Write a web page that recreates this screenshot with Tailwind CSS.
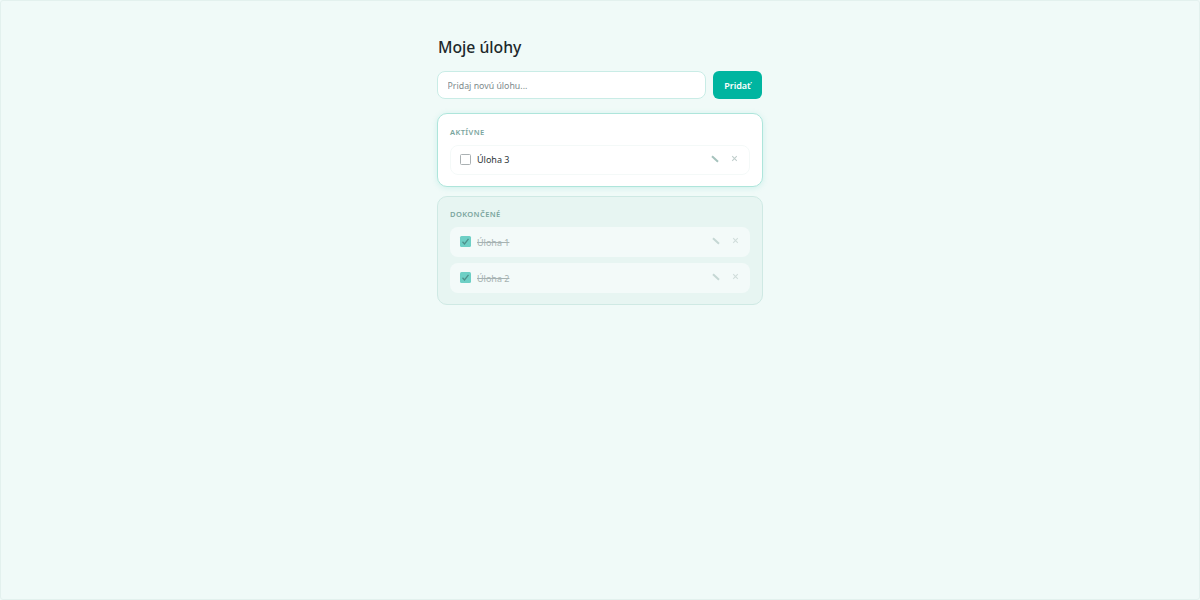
<!DOCTYPE html>
<html lang="en">
<head>
  <meta charset="UTF-8">
  <meta name="viewport" content="width=device-width, initial-scale=1.0">
  <title>Moje úlohy</title>
  <script src="https://cdn.jsdelivr.net/npm/@tailwindcss/browser@4"></script>
</head>
<body class="bg-[#f0faf8] text-[#20282b] font-['Noto_Sans',sans-serif]">
  <div class="h-[600px] overflow-hidden rounded-[3px] border border-[#e3f1ee] flex justify-center">
    <div class="w-[326px] pt-[35px]">
      <h1 class="text-[15.75px] leading-[22px] font-medium ml-px mb-[13px]">Moje úlohy</h1>

      <!-- New task form -->
      <form class="flex gap-[7px] mb-[14px]">
        <input placeholder="Pridaj novú úlohu..." class="flex-1 min-w-0 h-[28px] px-[9.5px] pt-px bg-white border border-[#c9ece6] rounded-[8px] text-[8.8px] placeholder-[#7d8a8c]">
        <button type="button" class="w-[49px] h-[28px] mr-px pt-px bg-[#00b5a0] text-white rounded-[6px] text-[9px] font-semibold">Pridať</button>
      </form>

      <!-- Active -->
      <section class="bg-white border border-[#aee5db] rounded-[10px] px-[12px] pt-[13px] pb-[11px] mb-[9px] shadow-[0_1px_6px_rgba(0,181,160,0.14)]">
        <h2 class="text-[7.5px] leading-[10px] font-semibold tracking-[0.4px] text-[#7ba59e] mb-[8px]">AKTÍVNE</h2>
        <div class="flex items-center h-[30px] pl-[9px] pr-[11px] rounded-[8px] border border-[#f4f9f8]">
          <span class="w-[11px] h-[11px] border-[1.5px] border-[#aab1b3] rounded-[1.5px] bg-white -mt-[2px]"></span>
          <span class="ml-[6px] text-[9px] text-[#2b3538]">Úloha 3</span>
          <div class="ml-auto flex items-center gap-[12px] -mt-[3px]">
            <svg class="w-[8px] h-[8px] text-[#a5c2bc]" viewBox="0 0 8 8" fill="none" stroke="currentColor" stroke-width="2"><path d="M1 1.2 7 6.8"/></svg>
            <svg class="w-[7px] h-[7px] text-[#c0cecc]" viewBox="0 0 7 7" fill="none" stroke="currentColor" stroke-width="1.1"><path d="M1.2 1.2 5.8 5.8M5.8 1.2 1.2 5.8"/></svg>
          </div>
        </div>
      </section>

      <!-- Done -->
      <section class="bg-[#e7f5f2] border border-[#cfe9e4] rounded-[10px] px-[12px] pt-[12px] pb-[11px]">
        <h2 class="text-[7.5px] leading-[10px] font-semibold tracking-[0.4px] text-[#7ba59e] mb-[8px]">DOKONČENÉ</h2>
        <div class="flex flex-col gap-[6px]">
          <div class="flex items-center h-[30px] pl-[10px] pr-[11px] rounded-[8px] bg-[#f3faf9]">
            <span class="w-[11px] h-[11px] rounded-[1.5px] bg-[#6dcfc5] flex items-center justify-center -mt-[2px]">
              <svg class="w-[9px] h-[9px]" viewBox="0 0 9 9" fill="none" stroke="#4d918b" stroke-width="1.3"><path d="M1.5 4.8 3.5 7 7.5 1.8"/></svg>
            </span>
            <span class="ml-[6px] mt-px text-[9px] text-[#a6b2b2] line-through">Úloha 1</span>
            <div class="ml-auto flex items-center gap-[12px] -mt-[3px]">
              <svg class="w-[8px] h-[8px] text-[#c5d7d4]" viewBox="0 0 8 8" fill="none" stroke="currentColor" stroke-width="2"><path d="M1 1.2 7 6.8"/></svg>
              <svg class="w-[7px] h-[7px] text-[#d0dddb]" viewBox="0 0 7 7" fill="none" stroke="currentColor" stroke-width="1.1"><path d="M1.2 1.2 5.8 5.8M5.8 1.2 1.2 5.8"/></svg>
            </div>
          </div>
          <div class="flex items-center h-[30px] pl-[10px] pr-[11px] rounded-[8px] bg-[#f3faf9]">
            <span class="w-[11px] h-[11px] rounded-[1.5px] bg-[#6dcfc5] flex items-center justify-center -mt-[2px]">
              <svg class="w-[9px] h-[9px]" viewBox="0 0 9 9" fill="none" stroke="#4d918b" stroke-width="1.3"><path d="M1.5 4.8 3.5 7 7.5 1.8"/></svg>
            </span>
            <span class="ml-[6px] mt-px text-[9px] text-[#a6b2b2] line-through">Úloha 2</span>
            <div class="ml-auto flex items-center gap-[12px] -mt-[3px]">
              <svg class="w-[8px] h-[8px] text-[#c5d7d4]" viewBox="0 0 8 8" fill="none" stroke="currentColor" stroke-width="2"><path d="M1 1.2 7 6.8"/></svg>
              <svg class="w-[7px] h-[7px] text-[#d0dddb]" viewBox="0 0 7 7" fill="none" stroke="currentColor" stroke-width="1.1"><path d="M1.2 1.2 5.8 5.8M5.8 1.2 1.2 5.8"/></svg>
            </div>
          </div>
        </div>
      </section>
    </div>
  </div>
</body>
</html>
